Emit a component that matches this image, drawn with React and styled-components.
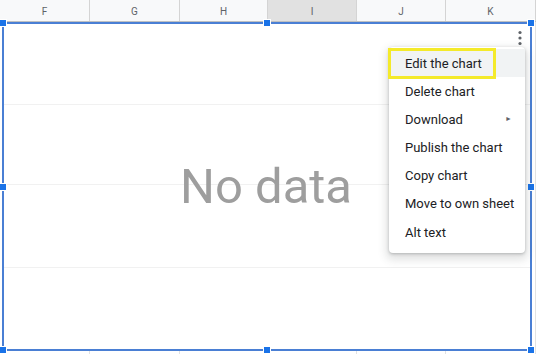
import React from 'react';
import styled, { createGlobalStyle } from 'styled-components';

const GlobalStyle = createGlobalStyle`
  html, body {
    margin: 0;
    padding: 0;
    background: #fff;
  }
  body {
    font-family: Roboto, "Liberation Sans", Arial, sans-serif;
  }
`;

const columns = [
  { name: 'F', width: 90 },
  { name: 'G', width: 90 },
  { name: 'H', width: 88 },
  { name: 'I', width: 89, selected: true },
  { name: 'J', width: 89 },
  { name: 'K', width: 90 },
];

const menuItems = [
  { label: 'Edit the chart', active: true },
  { label: 'Delete chart' },
  { label: 'Download', submenu: true },
  { label: 'Publish the chart' },
  { label: 'Copy chart' },
  { label: 'Move to own sheet' },
  { label: 'Alt text' },
];

const handles = [
  ['-1px', '-1px'], ['50%', '-1px'], ['calc(100% + 1px)', '-1px'],
  ['-1px', '50%'], ['calc(100% + 1px)', '50%'],
  ['-1px', 'calc(100% + 1px)'], ['50%', 'calc(100% + 1px)'], ['calc(100% + 1px)', 'calc(100% + 1px)'],
];

const Sheet = styled.div`
  position: relative;
  width: 536px;
  height: 354px;
  overflow: hidden;
  display: flex;
  flex-direction: column;
  background: #fff;
`;

const HeaderRow = styled.div`
  display: flex;
  height: 22px;
  flex: none;
  border-bottom: 1px solid #c0c0c0;
  box-sizing: border-box;
`;

const HeaderCell = styled.div`
  width: ${p => p.w}px;
  flex: none;
  box-sizing: border-box;
  border-right: 1px solid #d4d4d4;
  background: ${p => (p.selected ? '#e1e1e1' : '#f8f9fa')};
  color: #5f6368;
  font-size: 10px;
  display: flex;
  align-items: center;
  justify-content: center;
  padding-top: 1px;
`;

const Body = styled.div`
  flex: 1;
  display: flex;
`;

const BodyCol = styled.div`
  width: ${p => p.w}px;
  flex: none;
  box-sizing: border-box;
  border-right: 1px solid #e2e2e2;
`;

const Chart = styled.div`
  position: absolute;
  left: 2px;
  top: 22px;
  width: 530px;
  height: 329px;
  box-sizing: border-box;
  border: 2px solid #4a7fd4;
  background: #fff;
  display: grid;
  grid-template-rows: 81px 80px 83px 1fr;
`;

const GridBand = styled.div`
  border-bottom: ${p => (p.last ? 'none' : '1px solid #f1f1f1')};
`;

const NoData = styled.div`
  position: absolute;
  inset: 0;
  display: flex;
  align-items: center;
  justify-content: center;
  font-size: 49px;
  color: #9e9e9e;
  padding-right: 2px;
`;

const Handle = styled.span`
  position: absolute;
  width: 6px;
  height: 6px;
  background: #1a73e8;
  border: 1px solid #fff;
  box-sizing: content-box;
  transform: translate(-50%, -50%);
  left: ${p => p.x};
  top: ${p => p.y};
`;

const Kebab = styled.svg`
  position: absolute;
  right: 8px;
  top: 6px;
`;

const Menu = styled.ul`
  position: absolute;
  left: 389px;
  top: 47px;
  width: 136px;
  margin: 0;
  padding: 2px 0 7px;
  list-style: none;
  background: #fff;
  border-radius: 4px;
  box-shadow: 0 1px 3px rgba(60, 64, 67, 0.3), 0 4px 8px 3px rgba(60, 64, 67, 0.15);
  display: flex;
  flex-direction: column;
  gap: 0.2px;
`;

const MenuItem = styled.li`
  position: relative;
  height: 28px;
  display: flex;
  align-items: center;
  padding-left: 16px;
  font-size: 13px;
  color: #202124;
  background: ${p => (p.active ? '#f1f3f4' : 'transparent')};
  white-space: nowrap;
`;

const Highlight = styled.span`
  position: absolute;
  left: -1px;
  top: -1px;
  width: 108px;
  height: 31px;
  box-sizing: border-box;
  border: 3px solid #f4ea2a;
`;

const Arrow = styled.span`
  margin-left: auto;
  margin-right: 13px;
  font-size: 7px;
  color: #5f6368;
`;

export default function App() {
  return (
    <>
      <GlobalStyle />
      <Sheet>
        <HeaderRow>
          {columns.map(c => (
            <HeaderCell key={c.name} w={c.width} selected={c.selected}>
              {c.name}
            </HeaderCell>
          ))}
        </HeaderRow>
        <Body>
          {columns.map(c => (
            <BodyCol key={c.name} w={c.width} />
          ))}
        </Body>

        <Chart>
          <GridBand />
          <GridBand />
          <GridBand />
          <GridBand last />
          <NoData>No data</NoData>
          <Kebab width="4" height="16" viewBox="0 0 4 16">
            <circle cx="2" cy="2.5" r="1.6" fill="#5f6368" />
            <circle cx="2" cy="8" r="1.6" fill="#5f6368" />
            <circle cx="2" cy="13.5" r="1.6" fill="#5f6368" />
          </Kebab>
          {handles.map(([x, y]) => (
            <Handle key={x + y} x={x} y={y} />
          ))}
        </Chart>

        <Menu>
          {menuItems.map(item => (
            <MenuItem key={item.label} active={item.active}>
              {item.active && <Highlight />}
              {item.label}
              {item.submenu && <Arrow>►</Arrow>}
            </MenuItem>
          ))}
        </Menu>
      </Sheet>
    </>
  );
}
